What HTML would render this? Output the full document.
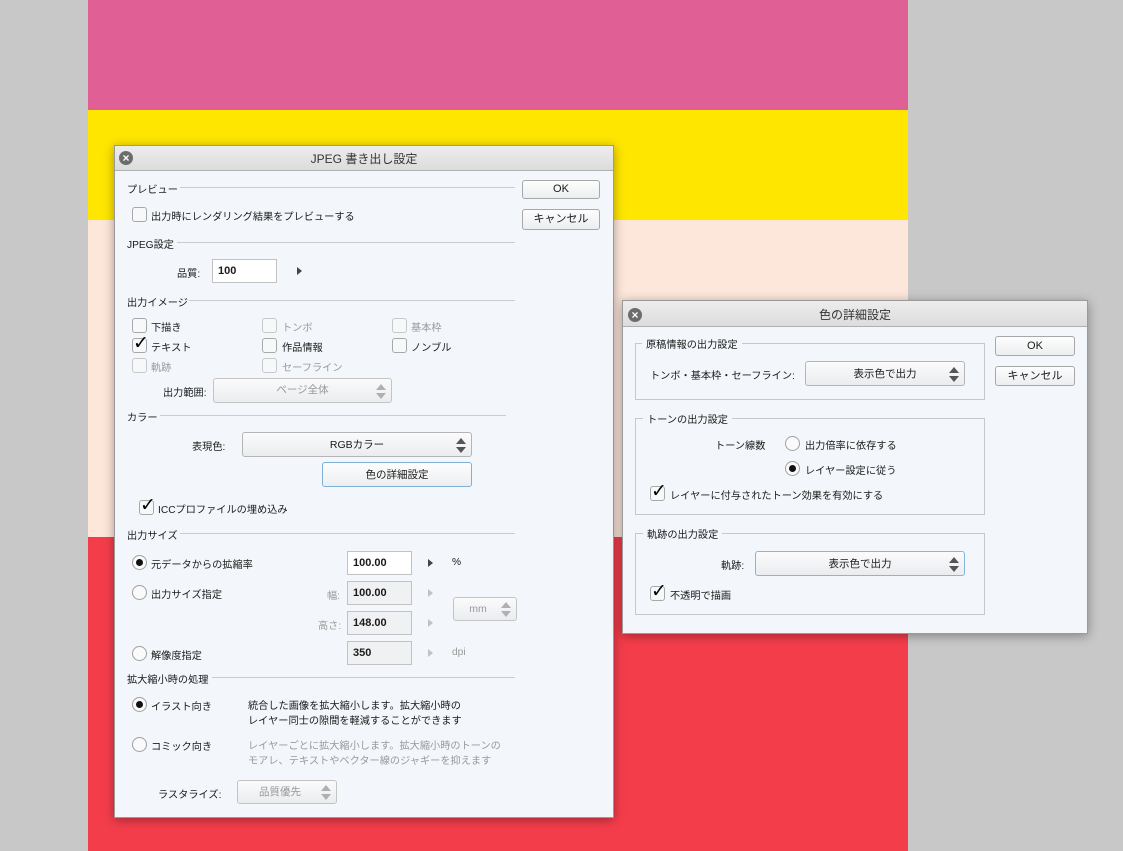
<!DOCTYPE html>
<html><head><meta charset="utf-8"><style>
*{margin:0;padding:0;box-sizing:border-box}
body{width:1123px;height:851px;position:relative;overflow:hidden;background:#c8c8c8;font-family:"Liberation Sans","Noto Sans CJK JP",sans-serif;font-size:10.2px;color:#1a1a1a}
.a{position:absolute;white-space:nowrap}
.dlg{position:absolute;background:#f3f6fa;border:1px solid #9a9a9a;box-shadow:0 2px 10px rgba(0,0,0,.35)}
.tb{position:absolute;left:0;right:0;top:0;background:linear-gradient(#ededed,#dcdcdc);border-bottom:1px solid #b0b0b0;text-align:center;font-size:12px;color:#333}
.x{position:absolute;width:14px;height:14px;border-radius:50%;background:#6c6c6c;color:#fff;font-size:12px;line-height:14px;text-align:center;font-weight:bold}
.hl{position:absolute;height:1px;background:#c9ccd0}
.cb{position:absolute;width:15px;height:15px;border:1px solid #a8a8a8;border-radius:3px;background:#f7f8fa}
.cb.dis{border-color:#c8c8c8}
.ck{position:absolute;left:0px;top:-7px;font-size:19px;color:#000;font-family:"DejaVu Sans",sans-serif;font-weight:bold}
.rd{position:absolute;width:15px;height:15px;border:1px solid #a0a0a0;border-radius:50%;background:#fafafa}
.rd.on::after{content:"";position:absolute;left:3px;top:3px;width:7px;height:7px;border-radius:50%;background:#111}
.btn{position:absolute;border:1px solid #a8a8a8;border-radius:3px;background:linear-gradient(#fdfdfd,#eceef0);text-align:center;font-size:11px}
.sel{position:absolute;border:1px solid #b5b5b5;border-radius:3px;background:linear-gradient(#fbfbfc,#eaecef);text-align:center;font-size:10.5px}
.sel.dis{color:#999;border-color:#c4c4c4}
.ar{position:absolute;right:4px;width:11px}
.ar::before{content:"";position:absolute;left:0;top:0;border:5.5px solid transparent;border-top:0;border-bottom:6px solid #555}
.ar::after{content:"";position:absolute;left:0;top:9px;border:5.5px solid transparent;border-bottom:0;border-top:6px solid #555}
.dis .ar::before{border-bottom-color:#b0b0b0}.dis .ar::after{border-top-color:#b0b0b0}
.in{position:absolute;border:1px solid #c2c2c2;background:#fff;padding-left:5px;font-size:11px;font-weight:bold}
.in.g{background:#f0f1f3}
.tri{position:absolute;width:0;height:0;border-top:4px solid transparent;border-bottom:4px solid transparent;border-left:5px solid #444}
.tri.g{border-left-color:#c2c2c2}
.gr{color:#9a9a9a}
.box{position:absolute;border:1px solid #c5c8cc}
.lg{position:absolute;background:#f3f6fa;padding:0 4px}
</style></head><body>
<div class="a" style="left:88px;top:0;width:820px;height:110px;background:#e06096"></div>
<div class="a" style="left:88px;top:110px;width:820px;height:110px;background:#ffe600"></div>
<div class="a" style="left:88px;top:220px;width:820px;height:317px;background:#fde6da"></div>
<div class="a" style="left:88px;top:537px;width:820px;height:314px;background:#f43d4b"></div>

<!-- Dialog 1 -->
<div class="dlg" style="left:114px;top:145px;width:500px;height:673px">
<div class="tb" style="height:25px;line-height:26px">JPEG 書き出し設定</div>
<div class="x" style="left:4px;top:5px">×</div>
</div>
<div class="a" style="left:127px;top:181px">プレビュー</div><div class="hl" style="left:180px;top:187px;width:335px"></div>
<div class="btn" style="left:522px;top:180px;width:78px;height:19px;line-height:17px">OK</div>
<div class="btn" style="left:522px;top:209px;width:78px;height:21px;line-height:19px">キャンセル</div>
<div class="cb" style="left:132px;top:207px"></div><div class="a" style="left:151px;top:208px">出力時にレンダリング結果をプレビューする</div>
<div class="a" style="left:127px;top:236px">JPEG設定</div><div class="hl" style="left:177px;top:242px;width:338px"></div>
<div class="a" style="left:177px;top:265px">品質:</div>
<div class="in" style="left:212px;top:259px;width:65px;height:24px;line-height:22px">100</div>
<div class="tri" style="left:297px;top:267px"></div>
<div class="a" style="left:127px;top:294px">出力イメージ</div><div class="hl" style="left:189px;top:300px;width:326px"></div>
<div class="cb" style="left:132px;top:318px"></div><div class="a" style="left:151px;top:319px">下描き</div>
<div class="cb dis" style="left:262px;top:318px"></div><div class="a gr" style="left:282px;top:319px">トンボ</div>
<div class="cb dis" style="left:392px;top:318px"></div><div class="a gr" style="left:411px;top:319px">基本枠</div>
<div class="cb" style="left:132px;top:338px"><span class="ck">✓</span></div><div class="a" style="left:151px;top:339px">テキスト</div>
<div class="cb" style="left:262px;top:338px"></div><div class="a" style="left:282px;top:339px">作品情報</div>
<div class="cb" style="left:392px;top:338px"></div><div class="a" style="left:411px;top:339px">ノンブル</div>
<div class="cb dis" style="left:132px;top:358px"></div><div class="a gr" style="left:151px;top:359px">軌跡</div>
<div class="cb dis" style="left:262px;top:358px"></div><div class="a gr" style="left:282px;top:359px">セーフライン</div>
<div class="a" style="left:163px;top:384px">出力範囲:</div>
<div class="sel dis" style="left:213px;top:378px;width:179px;height:25px;line-height:23px">ページ全体<div class="ar" style="top:5px;height:15px"></div></div>
<div class="a" style="left:127px;top:409px">カラー</div><div class="hl" style="left:160px;top:415px;width:346px"></div>
<div class="a" style="left:192px;top:438px">表現色:</div>
<div class="sel" style="left:242px;top:432px;width:230px;height:25px;line-height:24px">RGBカラー<div class="ar" style="top:5px;height:15px"></div></div>
<div class="btn" style="left:322px;top:462px;width:150px;height:25px;line-height:24px;border-color:#7fb1d6;font-size:10.5px">色の詳細設定</div>
<div class="cb" style="left:139px;top:500px"><span class="ck">✓</span></div><div class="a" style="left:158px;top:501px">ICCプロファイルの埋め込み</div>
<div class="a" style="left:127px;top:527px">出力サイズ</div><div class="hl" style="left:180px;top:533px;width:335px"></div>
<div class="rd on" style="left:132px;top:555px"></div><div class="a" style="left:151px;top:556px">元データからの拡縮率</div>
<div class="in" style="left:347px;top:551px;width:65px;height:24px;line-height:22px">100.00</div>
<div class="tri" style="left:428px;top:559px"></div><div class="a" style="left:452px;top:557px">%</div>
<div class="rd" style="left:132px;top:585px"></div><div class="a" style="left:151px;top:586px">出力サイズ指定</div>
<div class="a gr" style="left:327px;top:587px">幅:</div>
<div class="in g" style="left:347px;top:581px;width:65px;height:24px;line-height:22px">100.00</div>
<div class="tri g" style="left:428px;top:589px"></div>
<div class="a gr" style="left:318px;top:617px">高さ:</div>
<div class="in g" style="left:347px;top:611px;width:65px;height:24px;line-height:22px">148.00</div>
<div class="tri g" style="left:428px;top:619px"></div>
<div class="sel dis" style="left:453px;top:597px;width:64px;height:24px;line-height:22px;padding-right:14px">mm<div class="ar" style="top:4px;height:15px"></div></div>
<div class="rd" style="left:132px;top:646px"></div><div class="a" style="left:151px;top:647px">解像度指定</div>
<div class="in g" style="left:347px;top:641px;width:65px;height:24px;line-height:22px">350</div>
<div class="tri g" style="left:428px;top:649px"></div><div class="a gr" style="left:452px;top:647px">dpi</div>
<div class="a" style="left:127px;top:671px">拡大縮小時の処理</div><div class="hl" style="left:212px;top:677px;width:303px"></div>
<div class="rd on" style="left:132px;top:697px"></div><div class="a" style="left:151px;top:698px">イラスト向き</div>
<div class="a" style="left:248px;top:699px;line-height:15px">統合した画像を拡大縮小します。拡大縮小時の<br>レイヤー同士の隙間を軽減することができます</div>
<div class="rd" style="left:132px;top:737px"></div><div class="a" style="left:151px;top:738px">コミック向き</div>
<div class="a gr" style="left:248px;top:739px;line-height:15px">レイヤーごとに拡大縮小します。拡大縮小時のトーンの<br>モアレ、テキストやベクター線のジャギーを抑えます</div>
<div class="a" style="left:158px;top:786px">ラスタライズ:</div>
<div class="sel dis" style="left:237px;top:780px;width:100px;height:24px;line-height:22px;padding-right:14px">品質優先<div class="ar" style="top:4px;height:15px"></div></div>

<!-- Dialog 2 -->
<div class="dlg" style="left:622px;top:300px;width:466px;height:334px">
<div class="tb" style="height:26px;line-height:28px">色の詳細設定</div>
<div class="x" style="left:5px;top:7px">×</div>
</div>
<div class="box" style="left:635px;top:343px;width:350px;height:57px"></div>
<div class="lg" style="left:642px;top:336px">原稿情報の出力設定</div>
<div class="a" style="left:650px;top:367px">トンボ・基本枠・セーフライン:</div>
<div class="sel" style="left:805px;top:361px;width:160px;height:25px;line-height:24px">表示色で出力<div class="ar" style="top:5px;height:15px"></div></div>
<div class="box" style="left:635px;top:418px;width:350px;height:97px"></div>
<div class="lg" style="left:643px;top:411px">トーンの出力設定</div>
<div class="a" style="left:715px;top:437px">トーン線数</div>
<div class="rd" style="left:785px;top:436px"></div><div class="a" style="left:805px;top:437px">出力倍率に依存する</div>
<div class="rd on" style="left:785px;top:461px"></div><div class="a" style="left:805px;top:462px">レイヤー設定に従う</div>
<div class="cb" style="left:650px;top:486px"><span class="ck">✓</span></div><div class="a" style="left:670px;top:487px">レイヤーに付与されたトーン効果を有効にする</div>
<div class="box" style="left:635px;top:533px;width:350px;height:82px"></div>
<div class="lg" style="left:643px;top:526px">軌跡の出力設定</div>
<div class="a" style="left:721px;top:557px">軌跡:</div>
<div class="sel" style="left:755px;top:551px;width:210px;height:25px;line-height:24px;border-color:#86b6da">表示色で出力<div class="ar" style="top:5px;height:15px"></div></div>
<div class="cb" style="left:650px;top:586px"><span class="ck">✓</span></div><div class="a" style="left:670px;top:587px">不透明で描画</div>
<div class="btn" style="left:995px;top:336px;width:80px;height:20px;line-height:18px">OK</div>
<div class="btn" style="left:995px;top:366px;width:80px;height:20px;line-height:18px">キャンセル</div>
</body></html>
